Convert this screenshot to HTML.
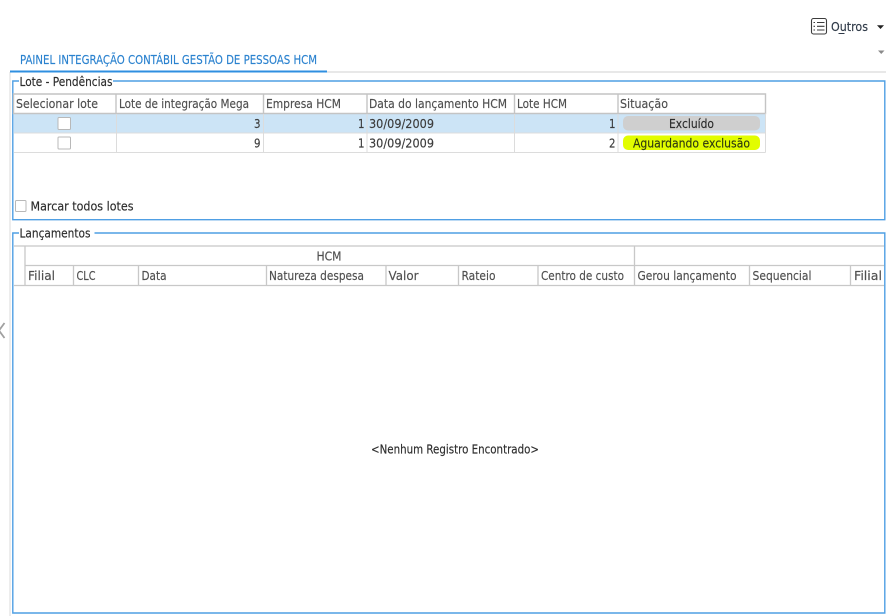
<!DOCTYPE html>
<html lang="pt">
<head>
<meta charset="utf-8">
<title>Painel Integração Contábil</title>
<style>
html,body{margin:0;padding:0;background:#fff;width:886px;height:616px;overflow:hidden}
svg{display:block;filter:blur(0.35px)}
text{font-family:"DejaVu Sans","Liberation Sans",sans-serif;font-size:12px;stroke-width:0.15px}
.h{fill:#4f4f4f;stroke:#4f4f4f}
.v{fill:#3c3c3c;stroke:#3c3c3c}
.d{fill:#2c2c2c;stroke:#2c2c2c}
</style>
</head>
<body>
<svg width="886" height="616" viewBox="0 0 886 616" xmlns="http://www.w3.org/2000/svg">
<rect width="886" height="616" fill="#fff"/>

<!-- left rail + tab line -->
<rect x="9" y="72" width="2" height="544" fill="#ededed"/>
<rect x="327" y="71" width="559" height="2" fill="#e8e8e8"/>
<rect x="10" y="70.500" width="317" height="2" fill="#2f8fe0"/>
<text x="20" y="64" fill="#2b82cf" stroke="#2b82cf" textLength="297" lengthAdjust="spacingAndGlyphs">PAINEL INTEGRAÇÃO CONTÁBIL GESTÃO DE PESSOAS HCM</text>

<!-- Outros -->
<g fill="none" stroke="#3c3c3c" stroke-width="1.100">
<rect x="811.500" y="18.500" width="15" height="15.500" rx="2"/>
<path d="M817 22.500h7.500M817 26.300h7.500M817 30h7.500"/>
<path d="M813.500 22.500h1.500M813.500 26.300h1.500M813.500 30h1.500"/>
</g>
<text x="831" y="31" fill="#2f3a48" stroke="#2f3a48" textLength="37" lengthAdjust="spacingAndGlyphs">Outros</text>
<rect x="838.500" y="33" width="6" height="1" fill="#2f3a48"/>
<path d="M877 25.200h7l-3.500 3.800z" fill="#222"/>
<path d="M878 50.500h6.500l-3.250 3.500z" fill="#8a8a8a"/>

<!-- chevron -->
<path d="M4.500 323L-1 330.500L4.500 338" fill="none" stroke="#a0a0a0" stroke-width="1.800"/>

<!-- Group 1 -->
<path d="M19 81H12.800V219.700H884.800V81H113" fill="none" stroke="#4f9fe4" stroke-width="1.400"/>
<text x="19.500" y="86" class="d" textLength="93" lengthAdjust="spacingAndGlyphs">Lote - Pendências</text>

<!-- Table 1 -->
<rect x="14" y="114" width="751" height="19" fill="#cce4f6"/>
<g fill="none" stroke="#c4c4c4">
<path d="M13.500 94H765.500V113.500H13.500z" stroke-width="1.400"/>
<path d="M116 94V113.500M263.500 94V113.500M367 94V113.500M514.500 94V113.500M618 94V113.500" stroke-width="1.400"/>
</g>
<g fill="none" stroke="#dcdcdc" stroke-width="1">
<path d="M14 133H765.500M14 152.500H765.500M765.500 113.500V152.500M116.500 114V152.500M263.500 114V152.500M367 114V152.500M514.500 114V152.500M618 114V152.500"/>
</g>
<text x="16" y="108" class="h" textLength="82" lengthAdjust="spacingAndGlyphs">Selecionar lote</text>
<text x="119" y="108" class="h" textLength="130" lengthAdjust="spacingAndGlyphs">Lote de integração Mega</text>
<text x="266" y="108" class="h" textLength="75" lengthAdjust="spacingAndGlyphs">Empresa HCM</text>
<text x="369" y="108" class="h" textLength="138" lengthAdjust="spacingAndGlyphs">Data do lançamento HCM</text>
<text x="517" y="108" class="h" textLength="50" lengthAdjust="spacingAndGlyphs">Lote HCM</text>
<text x="620" y="108" class="h" textLength="48" lengthAdjust="spacingAndGlyphs">Situação</text>

<rect x="58" y="117.500" width="12.500" height="12" rx="1" fill="#fff" stroke="#b8b8b8"/>
<rect x="58" y="137" width="12.500" height="12" rx="1" fill="#fff" stroke="#b8b8b8"/>

<text x="254" y="128" class="v" textLength="6.500" lengthAdjust="spacingAndGlyphs">3</text>
<text x="254" y="147.500" class="v" textLength="6.500" lengthAdjust="spacingAndGlyphs">9</text>
<text x="358" y="128" class="v" textLength="6.500" lengthAdjust="spacingAndGlyphs">1</text>
<text x="358" y="147.500" class="v" textLength="6.500" lengthAdjust="spacingAndGlyphs">1</text>
<text x="369" y="128" class="v" textLength="65" lengthAdjust="spacingAndGlyphs">30/09/2009</text>
<text x="369" y="147.500" class="v" textLength="65" lengthAdjust="spacingAndGlyphs">30/09/2009</text>
<text x="609" y="128" class="v" textLength="6.500" lengthAdjust="spacingAndGlyphs">1</text>
<text x="609" y="147.500" class="v" textLength="6.500" lengthAdjust="spacingAndGlyphs">2</text>

<rect x="623" y="116" width="137" height="14.500" rx="5" fill="#cfcfcf"/>
<rect x="623" y="135.500" width="137" height="14.500" rx="5" fill="#e2fd00"/>
<text x="669" y="128" class="d" textLength="45" lengthAdjust="spacingAndGlyphs">Excluído</text>
<text x="633" y="147.500" fill="#2f3a10" stroke="#2f3a10" textLength="117" lengthAdjust="spacingAndGlyphs">Aguardando exclusão</text>

<rect x="15.500" y="200.500" width="10.500" height="11" rx="1" fill="#fff" stroke="#b8b8b8"/>
<text x="30.500" y="210.500" class="d" textLength="103" lengthAdjust="spacingAndGlyphs">Marcar todos lotes</text>

<!-- Group 2 -->
<path d="M19 233H12.800V613H884.800V233H94.500" fill="none" stroke="#4f9fe4" stroke-width="1.400"/>
<text x="19.500" y="237.500" class="d" textLength="71" lengthAdjust="spacingAndGlyphs">Lançamentos</text>

<!-- Table 2 -->
<g fill="none" stroke="#c8c8c8" stroke-width="1.300">
<path d="M14 246H884M25 265.500H884M14 285.500H884M25 246V285.500M73.500 265.500V285.500M138.500 265.500V285.500M266.500 265.500V285.500M386 265.500V285.500M458.500 265.500V285.500M538 265.500V285.500M634.500 246V285.500M749.500 265.500V285.500M850.500 265.500V285.500"/>
</g>
<text x="316.500" y="260.500" class="h" textLength="25" lengthAdjust="spacingAndGlyphs">HCM</text>
<text x="28" y="280" class="h" textLength="27" lengthAdjust="spacingAndGlyphs">Filial</text>
<text x="76.500" y="280" class="h" textLength="19" lengthAdjust="spacingAndGlyphs">CLC</text>
<text x="141.500" y="280" class="h" textLength="25" lengthAdjust="spacingAndGlyphs">Data</text>
<text x="269" y="280" class="h" textLength="95" lengthAdjust="spacingAndGlyphs">Natureza despesa</text>
<text x="388.500" y="280" class="h" textLength="30" lengthAdjust="spacingAndGlyphs">Valor</text>
<text x="461.500" y="280" class="h" textLength="34" lengthAdjust="spacingAndGlyphs">Rateio</text>
<text x="541" y="280" class="h" textLength="83" lengthAdjust="spacingAndGlyphs">Centro de custo</text>
<text x="637.500" y="280" class="h" textLength="99" lengthAdjust="spacingAndGlyphs">Gerou lançamento</text>
<text x="752.500" y="280" class="h" textLength="59" lengthAdjust="spacingAndGlyphs">Sequencial</text>
<text x="854" y="280" class="h" textLength="28" lengthAdjust="spacingAndGlyphs">Filial</text>

<text x="371" y="453.500" class="d" textLength="168" lengthAdjust="spacingAndGlyphs">&lt;Nenhum Registro Encontrado&gt;</text>
</svg>
</body>
</html>
